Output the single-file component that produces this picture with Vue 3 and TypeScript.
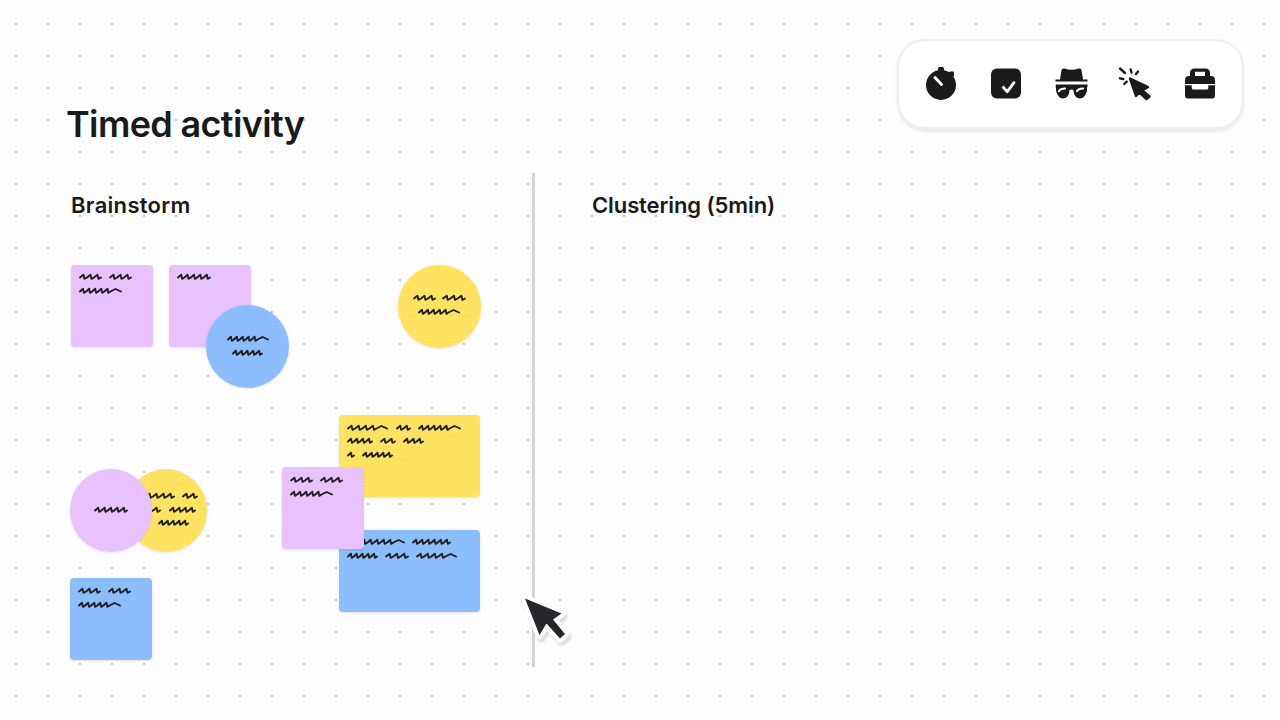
<script setup lang="ts">
type Word = [number, number]
interface Line { y: number; words: Word[] }
interface Note { id: number; x: number; y: number; w: number; color: string; round?: boolean; lines: Line[] }

// same scribble sits on most square notes
const shortText = (y: number): Line[] => [
  { y, words: [[9, 21], [39, 21]] },
  { y: y + 14, words: [[9, 41]] },
]

// page coordinates minus the canvas top (220), order = stacking order
const notes: Note[] = [
  { id: 1, x: 71, y: 45, w: 82, color: 'purple', lines: shortText(12) },
  { id: 2, x: 169, y: 45, w: 82, color: 'purple', lines: [{ y: 12, words: [[9, 32]] }] },
  { id: 3, x: 206, y: 85, w: 83, color: 'blue', round: true, lines: [{ y: 34, words: [[22, 40]] }, { y: 48, words: [[27, 29]] }] },
  { id: 4, x: 398, y: 45, w: 83, color: 'yellow', round: true, lines: [{ y: 33, words: [[16, 21], [45, 22]] }, { y: 47, words: [[21, 40]] }] },
  { id: 5, x: 339, y: 195, w: 141, color: 'yellow', lines: [
    { y: 13, words: [[9, 39], [58, 13], [80, 41]] },
    { y: 26, words: [[9, 24], [42, 14], [65, 19]] },
    { y: 40, words: [[9, 6], [24, 29]] },
  ] },
  { id: 6, x: 339, y: 310, w: 141, color: 'blue', lines: [
    { y: 12, words: [[9, 56], [74, 37]] },
    { y: 26, words: [[9, 29], [47, 22], [78, 39]] },
  ] },
  { id: 7, x: 282, y: 247, w: 82, color: 'purple', lines: shortText(13) },
  { id: 8, x: 125, y: 249, w: 82, color: 'yellow', round: true, lines: [
    { y: 27, words: [[14, 35], [58, 14]] },
    { y: 41, words: [[14, 21], [45, 25]] },
    { y: 54, words: [[34, 29]] },
  ] },
  { id: 9, x: 70, y: 249, w: 82, color: 'purple', round: true, lines: [{ y: 41, words: [[25, 32]] }] },
  { id: 10, x: 70, y: 358, w: 82, color: 'blue', lines: shortText(13) },
]

const scribble = (lines: Line[]): string => {
  let d = ''
  for (const line of lines) {
    for (const [x, w] of line.words) {
      // longer words end in a flatter tail
      const tail = w >= 38 ? 10.5 : 0
      const humps = Math.max(1, Math.round((w - tail) / 6.4))
      const step = (w - tail) / humps
      d += `M${x} ${line.y + 0.5}`
      for (let i = 0; i < humps; i++) {
        d += `l${step * 0.5} -2.8l${step * 0.14} 4.2l${step * 0.36} -1.4`
      }
      if (tail) d += `l5 -2.5l5.5 2.5`
    }
  }
  return d
}
</script>

<template>
  <div class="board">
    <header class="top">
      <h1 class="title">Timed activity</h1>
      <div class="toolbar">
        <svg class="tool" viewBox="0 0 34 34">
          <circle cx="17" cy="17" r="15" fill="#1a1a1a" />
          <rect x="14" y="-1" width="6" height="4" rx="1.5" fill="#1a1a1a" />
          <rect x="25" y="3.5" width="5" height="5" rx="1.2" fill="#1a1a1a" />
          <path d="M11 9.5L17.5 16.5" stroke="#fff" stroke-width="3" stroke-linecap="round" />
        </svg>
        <svg class="tool" viewBox="0 0 34 34">
          <rect x="2" y="0.5" width="30" height="30" rx="6" fill="#1a1a1a" />
          <path d="M14.3 19.3L18.3 23.7L25 14.7" fill="none" stroke="#fff" stroke-width="2.8" stroke-linecap="round" stroke-linejoin="round" />
        </svg>
        <svg class="tool" viewBox="0 0 34 34">
          <path d="M7.5 2Q8 0 10.5 0.5Q17.5 3 24.5 0.5Q27 0 27.5 2L29 11.5H33.5V13.5H1.5V11.5H6Z" fill="#1a1a1a" />
          <path d="M2 16.5H33.5V19L33 19.5C33.5 25.5 30 30.5 26 30.5C21.5 30.5 19.5 26 19.5 22C18 21.3 17 21.3 15.5 22C15.5 26 13.5 30.5 9 30.5C5 30.5 1.5 25.5 2 19.5L1.5 19Z" fill="#1a1a1a" />
          <path d="M5 23Q6.5 20.5 11 20.5M23 23Q24.5 20.5 29 20.5" fill="none" stroke="#fff" stroke-width="2.2" stroke-linecap="round" />
        </svg>
        <svg class="tool" viewBox="0 0 34 34">
          <path d="M12 10.5L30 19L24.5 22.5L31.5 28.5L28.5 31L21.5 24.5L18 28Z" fill="#1a1a1a" stroke="#1a1a1a" stroke-width="2.4" stroke-linejoin="round" />
          <path d="M2 0.5L7 5M12.7 1.5L13.5 4.5M20 3.5L18 6M2 10.3L5.3 11M6.3 16L8.7 13.7" stroke="#1a1a1a" stroke-width="2.4" stroke-linecap="round" fill="none" />
        </svg>
        <svg class="tool" viewBox="0 0 34 34">
          <path d="M7 9V5Q7 0.5 12 0.5H22Q27 0.5 27 5V9H22V3.8H12V9Z" fill="#1a1a1a" />
          <path d="M2 12Q2 8 6 8H28Q32 8 32 12V16H2Z" fill="#1a1a1a" />
          <path d="M2 17.3H8.7V20Q8.7 21.5 10.5 21.5H23.5Q25.3 21.5 25.3 20V17.3H32V27.5Q32 30.5 29 30.5H5Q2 30.5 2 27.5Z" fill="#1a1a1a" />
        </svg>
      </div>
    </header>

    <main class="columns">
      <section class="col col-left">
        <h2 class="heading heading-left">Brainstorm</h2>
        <div class="canvas">
          <div
            v-for="n in notes"
            :key="n.id"
            class="note"
            :class="[n.color, { round: n.round }]"
            :style="{ left: n.x + 'px', top: n.y + 'px', width: n.w + 'px' }"
          >
            <svg class="scribble"><path :d="scribble(n.lines)" /></svg>
          </div>
        </div>
      </section>
      <div class="divider"></div>
      <section class="col">
        <h2 class="heading heading-right">Clustering (5min)</h2>
      </section>
    </main>

    <svg class="cursor" viewBox="0 0 60 60">
      <path class="cursor-body" d="M10 8.5L46.5 23.5L38 29.5L50 44L45 48.5L31.5 33.5L24.5 45Z" />
    </svg>
  </div>
</template>

<style>
html, body { margin: 0; background: #fdfdfd; }
</style>

<style scoped>
.board {
  position: relative;
  width: 1280px;
  height: 720px;
  overflow: hidden;
  box-sizing: border-box;
  font-family: Inter, "Liberation Sans", sans-serif;
  color: #1a1a1a;
  background-color: #fdfdfd;
  background-image: radial-gradient(circle at 16px 24px, #bdbdbd 1px, transparent 1.6px);
  background-size: 32px 32px;
}
.top {
  display: flex;
  justify-content: space-between;
  align-items: flex-end;
  height: 129px;
  padding: 39px 36px 0 66px;
  box-sizing: border-box;
}
.title {
  margin: 0 0 -15px;
  font-size: 36px;
  line-height: 40px;
  font-weight: 600;
  letter-spacing: -0.65px;
}
.toolbar {
  display: flex;
  justify-content: space-between;
  align-items: center;
  width: 347px;
  height: 90px;
  padding: 1px 25px 0;
  box-sizing: border-box;
  background: #fff;
  border: 2px solid #eeeeee;
  border-radius: 28px;
  box-shadow: 0 3px 3px rgba(0, 0, 0, 0.07);
}
.tool {
  width: 34px;
  height: 34px;
  overflow: visible;
}
.columns {
  display: flex;
  height: 494px;
  margin-top: 44px;
}
.col {
  flex: 1;
}
.col-left {
  flex: none;
  width: 532px;
}
.heading {
  margin: 0;
  padding: 18px 0 1px;
  font-size: 22px;
  line-height: 28px;
  font-weight: 600;
}
.heading-left { padding-left: 71px; letter-spacing: 0.3px; }
.heading-right { padding-left: 57px; letter-spacing: -0.1px; }
.divider {
  width: 3px;
  background: #d4d4d4;
}
.canvas {
  position: relative;
}
.note {
  position: absolute;
  height: 82px;
  border-radius: 4px;
  box-shadow: 0 1px 3px rgba(0, 0, 0, 0.1);
}
.note.round {
  border-radius: 50%;
  height: 83px;
}
.purple { background: #e8c1ff; }
.blue { background: #8cbdff; }
.yellow {
  background-color: #ffe363;
  background-image: radial-gradient(circle, #fbdc55 0.7px, transparent 1px);
  background-size: 3px 3px;
}
.scribble {
  position: absolute;
  inset: 0;
  width: 100%;
  height: 100%;
}
.scribble path {
  fill: none;
  stroke: #1f1f1f;
  stroke-width: 1.9;
  stroke-linejoin: round;
  stroke-linecap: round;
}
.cursor {
  position: absolute;
  left: 515px;
  top: 590px;
  width: 60px;
  height: 60px;
  filter: drop-shadow(2px 3px 1.5px rgba(0, 0, 0, 0.14));
}
.cursor-body {
  fill: #25272d;
  stroke: #fff;
  stroke-width: 8;
  stroke-linejoin: round;
  paint-order: stroke;
}
</style>
